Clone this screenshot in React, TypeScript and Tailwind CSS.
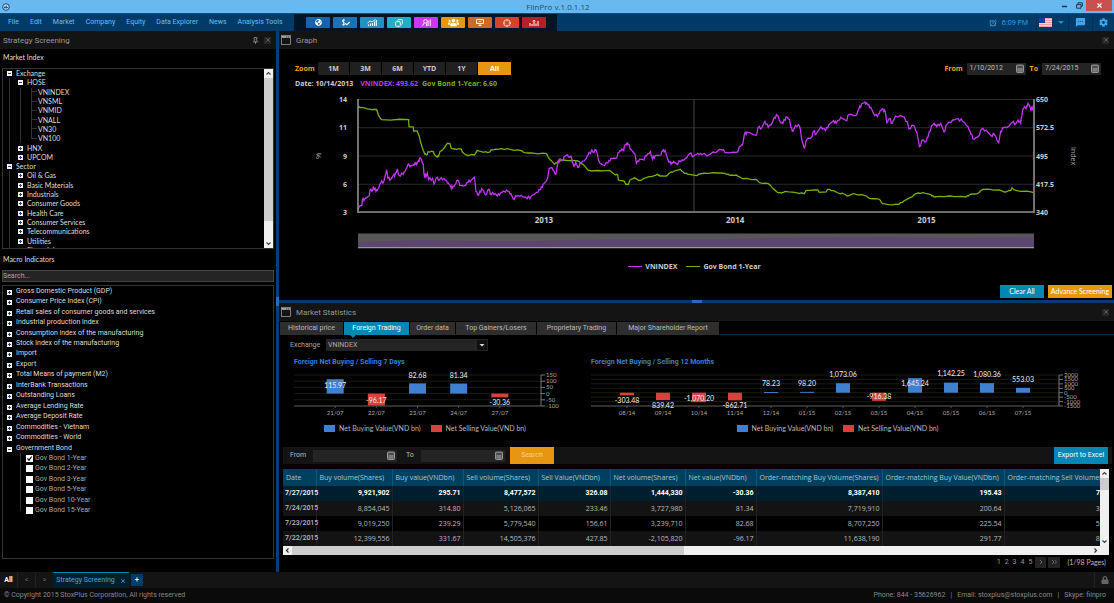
import React from "react";
import { FaGlobeAmericas, FaUsers, FaLock, FaCog } from "react-icons/fa";
import { MdSms } from "react-icons/md";
import { AlarmClock, Copy, Crosshair, Minus, Pin, X } from "lucide-react";

/* ---------- data ---------- */

interface TreeItem {
  label: string;
  level: number;
  open?: boolean;
  leaf?: boolean;
  last?: boolean;
}

const marketTree: TreeItem[] = [
  { label: "Exchange", level: 0, open: true },
  { label: "HOSE", level: 1, open: true },
  { label: "VNINDEX", level: 2, leaf: true },
  { label: "VNSML", level: 2, leaf: true },
  { label: "VNMID", level: 2, leaf: true },
  { label: "VNALL", level: 2, leaf: true },
  { label: "VN30", level: 2, leaf: true },
  { label: "VN100", level: 2, leaf: true, last: true },
  { label: "HNX", level: 1 },
  { label: "UPCOM", level: 1 },
  { label: "Sector", level: 0, open: true },
  { label: "Oil & Gas", level: 1 },
  { label: "Basic Materials", level: 1 },
  { label: "Industrials", level: 1 },
  { label: "Consumer Goods", level: 1 },
  { label: "Health Care", level: 1 },
  { label: "Consumer Services", level: 1 },
  { label: "Telecommunications", level: 1 },
  { label: "Utilities", level: 1 },
  { label: "Financials", level: 1 },
];

const macroItems = [
  "Gross Domestic Product (GDP)",
  "Consumer Price Index (CPI)",
  "Retail sales of consumer goods and services",
  "Industrial production index",
  "Consumption index of the manufacturing",
  "Stock index of the manufacturing",
  "Import",
  "Export",
  "Total Means of payment (M2)",
  "InterBank Transactions",
  "Outstanding Loans",
  "Average Lending Rate",
  "Average Deposit Rate",
  "Commodities - Vietnam",
  "Commodities - World",
];

const bonds = ["1-Year", "2-Year", "3-Year", "5-Year", "10-Year", "15-Year"];

// index and bond series, in chart units (2030 x 339)
const vnIndex =
  "0,333 4,322 12,318 13,303 20,300 34,290 36,273 44,274 46,262 54,277 60,270 68,252 78,246 86,212 90,237 98,242 108,226 110,232 118,210 122,228 136,226 144,210 152,195 156,203 166,197 172,195 178,192 182,184 188,178 196,196 198,225 204,234 208,222 212,242 224,238 228,255 236,236 244,243 250,236 262,244 272,252 278,262 284,267 292,256 298,244 310,260 320,260 330,250 340,243 350,234 354,277 362,289 366,276 374,272 384,288 392,271 400,287 404,280 418,291 428,282 438,276 450,277 460,285 466,300 476,292 490,289 508,299 520,292 536,280 548,272 556,256 566,246 570,235 574,208 582,206 586,214 594,226 600,194 606,180 614,184 622,171 640,172 642,180 648,204 654,190 660,205 670,192 684,180 690,170 702,153 706,160 714,152 726,192 736,198 750,192 760,178 774,178 784,160 792,150 798,154 800,141 806,134 812,136 820,152 832,166 836,193 846,180 856,182 866,171 878,158 884,180 892,170 908,168 914,157 922,154 930,180 940,196 948,187 956,194 968,188 984,178 996,164 1008,171 1020,163 1032,167 1056,167 1066,159 1094,153 1106,161 1136,160 1150,141 1156,133 1160,107 1168,99 1196,109 1202,85 1212,87 1222,67 1232,85 1244,71 1250,55 1260,49 1268,69 1276,73 1286,53 1296,61 1300,85 1306,97 1314,79 1326,81 1334,127 1340,147 1348,121 1362,115 1368,97 1376,105 1390,83 1404,95 1414,77 1428,65 1436,73 1450,55 1466,65 1474,47 1496,49 1504,31 1512,15 1522,9 1530,17 1540,25 1548,43 1560,53 1568,35 1576,29 1584,41 1588,71 1596,59 1604,73 1614,51 1636,53 1650,69 1654,89 1668,79 1678,99 1686,143 1696,123 1704,129 1712,113 1722,81 1730,73 1738,83 1750,73 1760,99 1768,77 1786,63 1802,59 1816,67 1832,83 1840,105 1850,121 1864,111 1872,91 1886,93 1902,111 1910,105 1924,131 1930,97 1938,87 1952,83 1964,71 1976,73 1982,63 1990,73 1996,33 2002,23 2006,29 2012,13 2018,23 2024,35 2028,19";

const govBond =
  "0,25 10,25 38,31 56,32 62,50 70,62 152,62 153,83 166,84 167,96 178,96 184,112 188,130 194,148 200,165 208,167 210,158 226,158 230,168 236,173 242,172 246,158 254,153 262,142 268,133 276,134 280,148 290,150 310,150 314,160 324,168 350,168 358,154 376,160 396,159 400,152 420,151 450,149 460,152 490,155 500,161 530,163 566,164 572,176 590,196 600,188 616,183 660,186 676,196 690,212 700,216 756,214 770,226 780,228 782,243 800,247 804,256 812,256 816,244 830,236 844,245 866,236 890,230 900,226 906,231 926,231 936,222 950,216 968,211 980,223 996,226 1016,230 1026,225 1066,221 1102,223 1116,229 1136,228 1154,239 1196,241 1206,251 1232,254 1252,273 1258,279 1272,283 1282,277 1316,281 1340,284 1346,274 1380,273 1386,280 1406,279 1410,271 1428,275 1442,282 1460,285 1470,291 1488,284 1526,291 1536,298 1564,300 1576,314 1596,317 1624,316 1640,305 1660,295 1676,284 1696,281 1720,287 1730,294 1776,291 1826,294 1838,286 1860,284 1876,271 1926,273 1941,279 1960,275 1964,266 1970,273 2028,280";

function withNoise(points: string, amp: number) {
  const pts = points.split(" ").map((p) => p.split(",").map(Number));
  const out: string[] = [];
  pts.forEach(([x, y], i) => {
    out.push(`${x},${y}`);
    const next = pts[i + 1];
    if (next && next[0] - x > 5) {
      const k = ((i * 37) % 11) / 10 - 0.5;
      const dx = (next[0] - x) / 3;
      const dy = (next[1] - y) / 3;
      out.push(`${x + dx},${y + dy + k * amp}`);
      out.push(`${x + 2 * dx},${y + 2 * dy - k * amp}`);
    }
  });
  return out.join(" ");
}

interface Bar {
  label: string;
  value: number;
  text: string;
  textY: number;
}

const sevenDays: Bar[] = [
  { label: "21/07", value: 115.97, text: "115.97", textY: 21 },
  { label: "22/07", value: -96.17, text: "-96.17", textY: 36 },
  { label: "23/07", value: 82.68, text: "82.68", textY: 11 },
  { label: "24/07", value: 81.34, text: "81.34", textY: 11 },
  { label: "27/07", value: -30.36, text: "-30.36", textY: 38 },
];

const twelveMonths: Bar[] = [
  { label: "08/14", value: -303.48, text: "-303.48", textY: 36 },
  { label: "09/14", value: -839.42, text: "839.42", textY: 41 },
  { label: "10/14", value: -1070.2, text: "-1,070.20", textY: 34 },
  { label: "11/14", value: -862.71, text: "-862.71", textY: 41 },
  { label: "12/14", value: 78.23, text: "78.23", textY: 19 },
  { label: "01/15", value: 98.2, text: "98.20", textY: 19 },
  { label: "02/15", value: 1073.06, text: "1,073.06", textY: 10 },
  { label: "03/15", value: -916.38, text: "-916.38", textY: 32 },
  { label: "04/15", value: 1645.24, text: "1,645.24", textY: 19 },
  { label: "05/15", value: 1142.25, text: "1,142.25", textY: 9 },
  { label: "06/15", value: 1080.36, text: "1,080.36", textY: 10 },
  { label: "07/15", value: 553.03, text: "553.03", textY: 15 },
];

const columns = [
  { name: "Date", width: "w-[33px]" },
  { name: "Buy volume(Shares)", width: "w-[76px]" },
  { name: "Buy value(VNDbn)", width: "w-[71px]" },
  { name: "Sell volume(Shares)", width: "w-[75px]" },
  { name: "Sell Value(VNDbn)", width: "w-[72px]" },
  { name: "Net volume(Shares)", width: "w-[75px]" },
  { name: "Net value(VNDbn)", width: "w-[71px]" },
  { name: "Order-matching Buy Volume(Shares)", width: "w-[126px]" },
  { name: "Order-matching Buy Value(VNDbn)", width: "w-[122px]" },
  { name: "Order-matching Sell Volume(Shares)", width: "w-[126px]" },
];

const rows = [
  ["7/27/2015", "9,921,902", "295.71", "8,477,572", "326.08", "1,444,330", "-30.36", "8,387,410", "195.43", "7,033,080"],
  ["7/24/2015", "8,854,045", "314.80", "5,126,065", "233.46", "3,727,980", "81.34", "7,719,910", "200.64", "3,991,930"],
  ["7/23/2015", "9,019,250", "239.29", "5,779,540", "156.61", "3,239,710", "82.68", "8,707,250", "225.54", "5,467,540"],
  ["7/22/2015", "12,399,556", "331.67", "14,505,376", "427.85", "-2,105,820", "-96.17", "11,638,190", "291.77", "8,744,010"],
];

/* ---------- small pieces ---------- */

const Toggle = ({ open }: { open?: boolean }) => (
  <svg viewBox="0 0 5 5" className="size-[5px] shrink-0" shapeRendering="crispEdges">
    <rect width="5" height="5" fill="#f4f4f4" />
    <path d={open ? "M1 2.5h3" : "M1 2.5h3M2.5 1v3"} stroke="#2b3f8f" strokeWidth="1" />
  </svg>
);

const Guide = ({ half }: { half?: boolean }) => (
  <span className="w-[11px] h-full shrink-0 flex justify-center items-start">
    <span className={half ? "w-px h-1/2 bg-[#333]" : "w-px h-full bg-[#333]"} />
  </span>
);

const CloseBox = () => (
  <button aria-label="Close panel" className="size-[7px] bg-[#262626] text-[#707070] flex items-center justify-center">
    <X size={6} strokeWidth={3} />
  </button>
);

const WindowIcon = () => (
  <svg viewBox="0 0 10 10" className="size-[10px] shrink-0" fill="none">
    <rect x="0.5" y="0.5" width="9" height="9" stroke="#999" strokeWidth="0.8" />
    <path d="M1 2h8" stroke="#999" strokeWidth="2" />
    <path d="M5 2h1M7 2h1" stroke="#222" strokeWidth="0.8" />
  </svg>
);

const CalendarIcon = () => (
  <svg viewBox="0 0 8 9" className="w-2 h-[9px] shrink-0">
    <rect x="0.5" y="1" width="7" height="7.5" rx="0.8" fill="#666" stroke="#aaa" strokeWidth="0.8" />
    <path d="M1.5 3h5" stroke="#222" strokeWidth="0.8" />
    <path d="M2 4.8h4M2 6.6h4M3 4v3.6M5 4v3.6" stroke="#999" strokeWidth="0.5" />
  </svg>
);

const DateBox = ({ id, value, className }: { id: string; value?: string; className: string }) => (
  <div className={`flex items-center bg-[#242424] h-3 pl-[3px] pr-0.5 ${className}`}>
    <input id={id} defaultValue={value} className="min-w-0 flex-1 bg-transparent text-[#bbb] outline-none" />
    <CalendarIcon />
  </div>
);

const PanelHeader = ({ title }: { title: string }) => (
  <div className="h-[18px] bg-[#141414] flex items-center pl-0.5 pr-[5px]">
    <WindowIcon />
    <h2 className="text-[8px] text-[#999] pl-[5px] flex-1">{title}</h2>
    <CloseBox />
  </div>
);

const VScroll = ({ thumb }: { thumb: string }) => (
  <div className="w-[9px] shrink-0 bg-[#f0f0f0] flex flex-col items-center">
    <svg viewBox="0 0 9 9" className="size-[9px]">
      <path d="M2.500 5.500l2-2 2 2" stroke="#444" strokeWidth="1.200" fill="none" />
    </svg>
    <div className={`w-full bg-[#cdcdcd] ${thumb}`} />
    <div className="flex-1" />
    <svg viewBox="0 0 9 9" className="size-[9px]">
      <path d="M2.500 3.500l2 2 2-2" stroke="#444" strokeWidth="1.200" fill="none" />
    </svg>
  </div>
);

/* ---------- top bars ---------- */

const TitleBar = () => (
  <header className="h-[13px] bg-[#69b9f1] flex items-stretch">
    <div className="flex-1 flex items-center pl-0.5">
      <svg viewBox="0 0 8 8" className="size-2">
        <circle cx="4" cy="4" r="3.3" fill="#b9d8ee" stroke="#1c4a86" strokeWidth="1" />
        <path d="M2 4.5h4M3 3v2.5M4.5 2.5v3" stroke="#1c4a86" strokeWidth="0.8" />
      </svg>
    </div>
    <h1 className="text-[8px] text-[#2a4a63] leading-[13px] font-['Open_Sans',sans-serif]">FiinPro v.1.0.1.12</h1>
    <div className="flex-1 flex justify-end text-[#1d3548]">
      <button aria-label="Minimize" className="w-4 flex items-end justify-center pb-[3px]">
        <Minus size={7} strokeWidth={5} />
      </button>
      <button aria-label="Restore" className="w-[14px] flex items-start pt-0.5 justify-center">
        <svg viewBox="0 0 7 7" className="size-[7px]" fill="none" stroke="currentColor">
          <path d="M2 2V.8h4.3v3.4H5" />
          <path d="M.6 2.6H5v3.6H.6z" />
        </svg>
      </button>
      <button aria-label="Close" className="w-[26px] h-[11px] mr-0.5 bg-[#c75050] text-white flex items-center justify-center">
        <X size={7} strokeWidth={4} />
      </button>
    </div>
  </header>
);

const tools = [
  { name: "World", bg: "bg-[#1763b0]", icon: <FaGlobeAmericas size={7} /> },
  {
    name: "Currency",
    bg: "bg-[#1c72b5]",
    icon: (
      <svg viewBox="0 0 9 7" className="w-[9px] h-[7px]" fill="none" stroke="currentColor">
        <path d="M4 1.3C3.300.7 1.200.6 1.200 2s2.900 1.200 2.900 2.700S1.800 6.200 1 5.300M2.600 0v6.800" strokeWidth="0.8" />
        <path d="M4.300 4.500l1.600 1.300L8.600 3" strokeWidth="1.100" />
      </svg>
    ),
  },
  {
    name: "Market chart",
    bg: "bg-[#2390c0]",
    icon: (
      <svg viewBox="0 0 10 7" className="w-[10px] h-[7px]" fill="none" stroke="currentColor">
        <path d="M1.500 7V5.500M3.500 7V4.500M5.500 7V4M7.500 7V2.500M9.300 7V1" strokeWidth="1.100" />
        <path d="M.5 4l2.500-2 2 .8L8.500.4" strokeWidth="0.8" />
      </svg>
    ),
  },
  { name: "Reports", bg: "bg-[#22afc6]", icon: <Copy size={8} strokeWidth={2.5} className="-scale-x-100" /> },
  {
    name: "Screening",
    bg: "bg-[#c739f5]",
    icon: (
      <svg viewBox="0 0 9 7" className="w-[9px] h-[7px]" fill="none" stroke="currentColor">
        <circle cx="3.500" cy="2.300" r="1.800" strokeWidth="0.9" />
        <path d="M2.300 3.800L.5 6.800M4.500 7V4.500M6 7V1.500M8.200 7V.5" strokeWidth="1" />
      </svg>
    ),
  },
  { name: "People", bg: "bg-[#e69612]", icon: <FaUsers size={11} /> },
  {
    name: "Monitor",
    bg: "bg-[#cc6c22]",
    icon: (
      <svg viewBox="0 0 8 7" className="w-2 h-[7px]" fill="none" stroke="currentColor">
        <path d="M.5.5h7v4h-7zM2.500 6.500h3M4 4.500v2" strokeWidth="0.9" />
        <path d="M2 3.500l1.200-1.200 1 .7 1.500-1.500" strokeWidth="0.7" />
      </svg>
    ),
  },
  { name: "Target", bg: "bg-[#d9422a]", icon: <Crosshair size={8} strokeWidth={2} /> },
  {
    name: "Analytics",
    bg: "bg-[#b52026]",
    icon: (
      <svg viewBox="0 0 10 7" className="w-[10px] h-[7px]" fill="none" stroke="currentColor">
        <path d="M1 7V4M3 7V5M5 7V1.500M7 7V4.500M9 7V2" strokeWidth="1" />
        <path d="M3.500 2.500L5 1l1.500 1.500" strokeWidth="0.7" />
      </svg>
    ),
  },
];

const MenuBar = () => (
  <nav className="h-[18px] bg-[#003a66] border-t border-[#00528c] flex items-center text-[#6fbdf2]">
    <div className="w-[294px] flex items-center gap-[11px] pl-2 whitespace-nowrap">
      {["File", "Edit", "Market", "Company", "Equity", "Data Explorer", "News", "Analysis Tools"].map((m) => (
        <button key={m}>{m}</button>
      ))}
    </div>
    <div className="h-full bg-[#001526] flex items-center gap-[3px] pl-3 pr-[11px]">
      {tools.map((t) => (
        <button
          key={t.name}
          aria-label={t.name}
          className={`w-6 h-[11px] rounded-[1px] text-white flex items-center justify-center ${t.bg}`}
        >
          {t.icon}
        </button>
      ))}
    </div>
    <div className="flex-1 flex justify-end items-center h-full">
      <AlarmClock size={8} strokeWidth={2.5} className="text-[#43a5e8]" />
      <span className="pl-[5px] pr-2 text-[#43a5e8] font-['Open_Sans',sans-serif]">6:09 PM</span>
      <button aria-label="Language" className="h-full flex items-center gap-[6px] border-l border-[#002f54] px-0.5">
        <svg viewBox="0 0 13 9" className="w-[13px] h-[9px]">
          <rect width="13" height="9" fill="#f3d5da" />
          <path d="M0 .5h13M0 2.500h13M0 4.500h13M0 6.500h13M0 8.500h13" stroke="#ea95a2" strokeWidth="0.9" />
          <rect width="6" height="5" fill="#1d3f8f" />
        </svg>
        <svg viewBox="0 0 6 3" className="w-[6px] h-[3px]">
          <path d="M0 0h6L3 3z" fill="#1b8fc9" />
        </svg>
      </button>
      <button aria-label="Messages" className="h-full ml-0.5 px-[6px] border-l border-[#002f54] flex items-center">
        <MdSms size={11} className="text-[#43a5e8]" />
      </button>
      <button aria-label="Settings" className="h-full px-[6px] border-l border-[#002f54] flex items-center">
        <FaCog size={9} className="text-[#43a5e8]" />
      </button>
    </div>
  </nav>
);

/* ---------- left side ---------- */

const LeftPanel = () => (
  <aside className="w-[276px] shrink-0 flex flex-col">
    <div className="h-[18px] bg-[#141414] flex items-center pl-[3px] pr-[5px] gap-[5px]">
      <h2 className="text-[8px] text-[#999] flex-1">Strategy Screening</h2>
      <Pin size={7} strokeWidth={3} className="text-[#999]" />
      <CloseBox />
    </div>
    <h3 className="text-[#ddd] pl-[3px] pt-1 pb-[6px] font-['Lato',sans-serif]">Market Index</h3>
    <div className="mx-0.5 h-[181px] border border-[#333] flex overflow-hidden">
      <ul className="flex-1 h-[186px] grid auto-rows-fr pl-px text-[#ddd] font-['Lato',sans-serif]">
        {marketTree.map((t) => (
          <li key={t.label} className="flex items-center min-h-0">
            {t.level > 0 && <Guide />}
            {t.level > 1 && <Guide />}
            {t.leaf ? (
              <span className="w-[11px] h-full flex justify-end items-start">
                <span className={t.last ? "w-px h-1/2 bg-[#333]" : "w-px h-full bg-[#333]"} />
                <span className="w-[5px] h-1/2 border-b border-[#333]" />
              </span>
            ) : (
              <span className="w-[11px] flex justify-center">
                <Toggle open={t.open} />
              </span>
            )}
            <span className="pl-px">{t.label}</span>
          </li>
        ))}
      </ul>
      <VScroll thumb="grow-[8]" />
    </div>
    <h3 className="text-[#ddd] pl-[3px] pt-[6px] pb-[6px] font-['Lato',sans-serif]">Macro Indicators</h3>
    <input
      aria-label="Search indicators"
      placeholder="Search..."
      className="mx-0.5 h-3 bg-[#242424] border border-[#444] text-[#bbb] placeholder:text-[#aaa] outline-none"
    />
    <div className="mx-0.5 mt-[3px] mb-[13px] flex-1 border border-[#333]">
      <ul className="h-[230px] grid auto-rows-fr pl-px text-[#ddd]">
        {macroItems.map((m) => (
          <li key={m} className="flex items-center min-h-0">
            <span className="w-[11px] flex justify-center pt-0.5">
              <Toggle />
            </span>
            <span className="pl-px">{m}</span>
          </li>
        ))}
        <li className="flex items-center min-h-0">
          <span className="w-[11px] flex justify-center pt-0.5">
            <Toggle open />
          </span>
          <span className="pl-px">Government Bond</span>
        </li>
        {bonds.map((b, i) => (
          <li key={b} className="flex items-center min-h-0 pl-[11px]">
            <Guide half={i === bonds.length - 1} />
            <label className="flex items-center gap-0.5 text-[#aaa]">
              <span className="relative size-[7px] bg-white">
                <input type="checkbox" defaultChecked={i === 0} className="peer appearance-none absolute inset-0" />
                <svg viewBox="0 0 7 7" className="hidden peer-checked:block absolute inset-0 pointer-events-none">
                  <path d="M1.500 3.500l1.500 1.700 2.700-3.700" stroke="#111" strokeWidth="1.200" fill="none" />
                </svg>
              </span>
              Gov Bond {b}
            </label>
          </li>
        ))}
      </ul>
    </div>
  </aside>
);

/* ---------- graph ---------- */

const leftTicks = ["14", "11", "9", "6", "3"];
const rightTicks = ["650", "572.5", "495", "417.5", "340"];
const years = [
  { name: "2013", x: "27.5%" },
  { name: "2014", x: "55.8%" },
  { name: "2015", x: "84.1%" },
];

const LineChart = () => (
  <div className="pl-[79px] pr-[80px] mt-[11px]">
    <svg className="block w-full h-[151px] overflow-visible">
      {leftTicks.map((t, i) => (
        <g key={t}>
          <line x1="0" x2="100%" y1={i * 28.25 + 0.5} y2={i * 28.25 + 0.5} stroke="#2b2b2b" />
          <text x="-11" y={i * 28.25 + 3} textAnchor="end" className="fill-[#ccc] font-bold">
            {t}
          </text>
          <text x="100%" dx="2" y={i * 28.25 + 3} className="fill-[#ccc] font-bold">
            {rightTicks[i]}
          </text>
        </g>
      ))}
      <line x1="49.7%" x2="49.7%" y1="0" y2="113" stroke="#444" />
      <svg width="100%" height="113" viewBox="0 0 2030 339" preserveAspectRatio="none" overflow="visible">
        <polyline points={withNoise(govBond, 3)} fill="none" stroke="#76b000" strokeWidth="1.3" vectorEffect="non-scaling-stroke" />
        <polyline points={withNoise(vnIndex, 9)} fill="none" stroke="#c435f5" strokeWidth="1.3" vectorEffect="non-scaling-stroke" />
      </svg>
      <line x1="0" x2="0" y1="0" y2="114" stroke="#999" strokeWidth="1.5" />
      <line x1="100%" x2="100%" y1="0" y2="114" stroke="#999" strokeWidth="1.5" />
      <line x1="0" x2="100%" y1="113" y2="113" stroke="#888" strokeWidth="1.5" />
      <text transform="translate(-37 57) rotate(-90)" textAnchor="middle" className="fill-[#aaa] text-[8px]">
        %
      </text>
      <svg x="100%" overflow="visible">
        <text transform="translate(37 57) rotate(90)" textAnchor="middle" className="fill-[#aaa]">
          Index
        </text>
      </svg>
      {years.map((y) => (
        <text key={y.name} x={y.x} y="124" textAnchor="middle" className="fill-[#ccc] font-bold text-[8px]">
          {y.name}
        </text>
      ))}
      {/* range navigator */}
      <rect x="0" y="134.500" width="100%" height="15" fill="#575757" />
      <svg y="135" width="100%" height="13" viewBox="0 0 100 13" preserveAspectRatio="none">
        <path d="M0 8L9 6 18 7 26 7 32 6 40 5 55 5 61 4 78 3 88 4 100 3V13H0z" fill="#5c4670" />
      </svg>
      <line x1="0" x2="100%" y1="148.500" y2="148.500" stroke="#999" />
    </svg>
  </div>
);

const GraphPanel = () => (
  <section className="flex flex-col">
    <PanelHeader title="Graph" />
    <div className="font-['Open_Sans',sans-serif]">
      <div className="pl-4 pr-[13px] pt-[13px] flex items-center">
        <span className="text-[#f0a010] font-bold w-[23px]">Zoom</span>
        <div className="flex h-[13px] font-bold text-[#ccc]">
          {["1M", "3M", "6M", "YTD", "1Y"].map((z) => (
            <button key={z} className="w-8 bg-[#202020] border-r border-black">
              {z}
            </button>
          ))}
          <button className="w-[33px] bg-[#e89611] text-white">All</button>
        </div>
        <div className="flex-1" />
        <label htmlFor="graph-from" className="text-[#f0a010] font-bold pr-1">
          From
        </label>
        <div className="font-['Roboto',sans-serif]">
          <DateBox id="graph-from" value="1/10/2012" className="w-[59px]" />
        </div>
        <label htmlFor="graph-to" className="text-[#f0a010] font-bold px-1">
          To
        </label>
        <div className="font-['Roboto',sans-serif]">
          <DateBox id="graph-to" value="7/24/2015" className="w-[59px]" />
        </div>
      </div>
      <p className="pl-4 mt-1 font-bold flex gap-1">
        <span className="text-[#ccc] pr-[3px]">Date: 10/14/2013</span>
        <span className="text-[#c435f5]">VNINDEX: 493.62</span>
        <span className="text-[#76b000]">Gov Bond 1-Year: 6.60</span>
      </p>
      <LineChart />
      <div className="mt-3 pr-1 flex justify-center gap-[9px] font-bold text-[#ccc]">
        <span className="flex items-center gap-[3px]">
          <i className="w-[14px] h-px bg-[#c435f5]" />
          VNINDEX
        </span>
        <span className="flex items-center gap-[3px]">
          <i className="w-[14px] h-px bg-[#76b000]" />
          Gov Bond 1-Year
        </span>
      </div>
    </div>
    <div className="mt-[14px] mb-0.5 pr-0.5 flex justify-end gap-1 text-white font-['Lato',sans-serif]">
      <button className="w-11 h-[13px] bg-[#0087b3]">Clear All</button>
      <button className="w-16 h-[13px] bg-[#e89611] whitespace-nowrap">Advance Screening</button>
    </div>
  </section>
);

/* ---------- market statistics ---------- */

interface BarChartProps {
  title: string;
  bars: Bar[];
  ticks: number[];
  barWidth: number;
  plotMargin: string;
  legendMargin: string;
}

const TOP = 8;
const HEIGHT = 31;

const BarChart = ({ title, bars, ticks, barWidth, plotMargin, legendMargin }: BarChartProps) => {
  const max = ticks[0];
  const min = ticks[ticks.length - 1];
  const toY = (v: number) => TOP + ((max - v) / (max - min)) * HEIGHT;

  return (
    <div>
      <h3 className="font-bold text-[#3a7fcf]">{title}</h3>
      <div className={plotMargin}>
        <svg className="block w-full h-[53px] overflow-visible font-['Lato',sans-serif]">
          {ticks.map((t) => (
            <g key={t}>
              <line x1="0" x2="100%" y1={toY(t)} y2={toY(t)} stroke="#1c1c0a" />
              <svg x="100%" y={toY(t)} overflow="visible">
                <line x1="0" x2="4" y1="0" y2="0" stroke="#777" />
                <text x="5" y="2" className="fill-[#aaa] text-[6px]">
                  {t}
                </text>
              </svg>
            </g>
          ))}
          <line x1="0" x2="100%" y1={TOP + HEIGHT} y2={TOP + HEIGHT} stroke="#555" />
          <line x1="100%" x2="100%" y1={TOP} y2={TOP + HEIGHT} stroke="#777" />
          {bars.map((b, i) => {
            const x = `${((i + 1) / (bars.length + 1)) * 100}%`;
            const y0 = toY(Math.max(b.value, 0));
            return (
              <svg key={b.label} x={x} overflow="visible">
                <rect
                  x={-barWidth / 2}
                  y={y0}
                  width={barWidth}
                  height={Math.max(toY(Math.min(b.value, 0)) - y0, 1)}
                  fill={b.value > 0 ? "#3f80d0" : "#d9413d"}
                />
                <line x1="0" x2="0" y1={TOP + HEIGHT} y2={TOP + HEIGHT + 2} stroke="#555" />
                <text x="0" y={b.textY} textAnchor="middle" className="fill-[#eee]">
                  {b.text}
                </text>
                <text x="0" y="48" textAnchor="middle" className="fill-[#aaa] text-[6px]">
                  {b.label}
                </text>
              </svg>
            );
          })}
        </svg>
      </div>
      <div className={`mt-1 flex justify-center gap-[10px] text-[#bbb] font-['Lato',sans-serif] ${legendMargin}`}>
        <span className="flex items-center gap-1">
          <i className="w-[11px] h-[7px] bg-[#3f80d0]" />
          Net Buying Value(VND bn)
        </span>
        <span className="flex items-center gap-1">
          <i className="w-[11px] h-[7px] bg-[#d9413d]" />
          Net Selling Value(VND bn)
        </span>
      </div>
    </div>
  );
};

const tabs = [
  { name: "Historical price", width: "w-[63px]" },
  { name: "Foreign Trading", width: "w-[65px]" },
  { name: "Order data", width: "w-[45px]" },
  { name: "Top Gainers/Losers", width: "w-[80px]" },
  { name: "Proprietary Trading", width: "w-[79px]" },
  { name: "Major Shareholder Report", width: "w-[102px]" },
];

const StatsTable = () => (
  <div className="ml-1 mr-[5px] mt-[5px] flex">
    <div className="flex-1 min-w-0">
      <div className="overflow-hidden font-['Open_Sans',sans-serif]">
        <table className="table-fixed w-[847px] border-collapse">
          <thead>
            <tr className="h-[17px] bg-[#00405f] text-[#a9c6d3]">
              {columns.map((c) => (
                <th
                  key={c.name}
                  className={`font-normal text-left p-0 pl-[3px] border-r border-[#005a82] whitespace-nowrap ${c.width}`}
                >
                  {c.name}
                </th>
              ))}
            </tr>
          </thead>
          <tbody>
            {rows.map((r, ri) => (
              <tr
                key={r[0]}
                className={
                  ri === 0
                    ? "h-[15px] bg-[#001f2e] text-white font-bold font-['Roboto',sans-serif]"
                    : ri % 2
                      ? "h-[15px] bg-[#131313] text-[#bbb]"
                      : "h-[15px] bg-black text-[#bbb]"
                }
              >
                {r.map((v, i) => (
                  <td
                    key={i}
                    className={
                      i === 0
                        ? "p-0 pl-0.5 border-r border-[#222] font-medium font-['Roboto',sans-serif]"
                        : "p-0 pr-0.5 text-right border-r border-[#222]"
                    }
                  >
                    {v}
                  </td>
                ))}
              </tr>
            ))}
          </tbody>
        </table>
      </div>
      <div className="h-[9px] bg-[#f0f0f0] flex items-center">
        <svg viewBox="0 0 9 9" className="size-[9px]">
          <path d="M5.500 2.500l-2 2 2 2" stroke="#333" strokeWidth="1.200" fill="none" />
        </svg>
        <div className="h-full w-[48%] bg-[#cdcdcd]" />
        <div className="flex-1" />
        <svg viewBox="0 0 9 9" className="size-[9px]">
          <path d="M3.500 2.500l2 2-2 2" stroke="#333" strokeWidth="1.200" fill="none" />
        </svg>
      </div>
    </div>
    <div className="flex flex-col bg-[#f0f0f0]">
      <div className="flex flex-1">
        <VScroll thumb="h-3" />
      </div>
      <div className="h-[9px]" />
    </div>
  </div>
);

const StatsPanel = () => (
  <section className="flex-1 flex flex-col">
    <PanelHeader title="Market Statistics" />
    <div className="mt-px ml-px h-[13px] flex gap-px border-b border-[#00263c]">
      {tabs.map((t, i) => (
        <button
          key={t.name}
          className={
            i === 1
              ? `relative h-[13px] bg-[#0087b3] text-white ${t.width}`
              : `h-[13px] bg-[#2e2e2e] text-[#bbb] whitespace-nowrap ${t.width}`
          }
        >
          {t.name}
          {i === 1 && (
            <svg viewBox="0 0 6 3" className="absolute left-[6px] top-full w-[6px] h-[3px]">
              <path d="M0 0h6L3 3z" fill="#0087b3" />
            </svg>
          )}
        </button>
      ))}
    </div>
    <div className="mt-1 pl-[11px] flex items-center">
      <label htmlFor="exchange" className="w-9 text-[#aaa]">
        Exchange
      </label>
      <div className="relative w-[162px] h-3">
        <select id="exchange" className="block w-full h-3 appearance-none bg-[#242424] text-[#aaa] pl-0.5 outline-none">
          <option>VNINDEX</option>
        </select>
        <svg viewBox="0 0 10 10" className="absolute right-px top-px size-[10px] bg-[#111] pointer-events-none">
          <path d="M2.500 4h5L5 6.500z" fill="#ddd" />
        </svg>
      </div>
    </div>
    <div className="mt-[7px] pl-[15px] grid grid-cols-[297fr_523fr]">
      <BarChart
        title="Foreign Net Buying / Selling 7 Days"
        bars={sevenDays}
        ticks={[150, 100, 50, 0, -50, -100]}
        barWidth={17}
        plotMargin="mr-[50px]"
        legendMargin="mr-[35px]"
      />
      <BarChart
        title="Foreign Net Buying / Selling 12 Months"
        bars={twelveMonths}
        ticks={[2000, 1500, 1000, 500, 0, -500, -1000, -1500]}
        barWidth={14}
        plotMargin="mr-[55px]"
        legendMargin="mr-[30px]"
      />
    </div>
    <form className="mt-[14px] ml-1 mr-0.5 h-[17px] bg-[#141414] flex items-center text-[#bbb]">
      <label htmlFor="stat-from" className="w-[30px] pl-[7px]">
        From
      </label>
      <DateBox id="stat-from" className="w-[84px]" />
      <label htmlFor="stat-to" className="w-6 pl-[9px]">
        To
      </label>
      <DateBox id="stat-to" className="w-[84px]" />
      <button type="button" className="ml-[5px] w-11 h-full bg-[#e89611] text-[#f5cf94]">
        Search
      </button>
      <div className="flex-1" />
      <button type="button" className="mr-1 w-[54px] h-full bg-[#0087b3] text-white">
        Export to Excel
      </button>
    </form>
    <StatsTable />
    <div className="mt-px pr-2 flex justify-end items-center text-[#999] h-3">
      <div className="flex gap-1">
        <a href="#1" className="text-[#e89611]">1</a>
        <a href="#2">2</a>
        <a href="#3">3</a>
        <a href="#4">4</a>
        <a href="#5">5</a>
      </div>
      <button aria-label="Next page" className="ml-[3px] w-[11px] h-[11px] bg-[#222] flex items-center justify-center">
        <svg viewBox="0 0 6 6" className="size-[6px]" fill="none" stroke="#666">
          <path d="M2 1l2 2-2 2" />
        </svg>
      </button>
      <button aria-label="Last page" className="ml-0.5 w-3 h-[11px] bg-[#222] flex items-center justify-center">
        <svg viewBox="0 0 8 6" className="w-2 h-[6px]" fill="none" stroke="#666">
          <path d="M2 1l2 2-2 2M4.500 1l2 2-2 2" />
        </svg>
      </button>
      <span className="ml-[7px] text-[#bbb] font-['Lato',sans-serif]">(1/98 Pages)</span>
    </div>
  </section>
);

/* ---------- bottom ---------- */

const Footer = () => (
  <footer>
    <div className="h-4 bg-[#141414] flex items-center text-[#aaa]">
      <button className="w-[17px] font-bold text-white">All</button>
      <button className="w-[18px] h-full border-l border-[#222] text-[#666]">&lt;</button>
      <button className="w-[18px] h-full border-l border-[#222] text-[#666]">&gt;</button>
      <button className="w-[76px] h-full bg-[#001f2e] border-t border-[#0087b3] text-[#43a5e8] flex items-center justify-center gap-[5px]">
        Strategy Screening
        <X size={6} strokeWidth={3} />
      </button>
      <button aria-label="Add tab" className="ml-0.5 size-3 bg-[#003a66] text-white font-bold">
        +
      </button>
      <div className="flex-1" />
      <button aria-label="Lock" className="w-5 h-full border-l border-[#222] flex items-center justify-center text-[#666]">
        <FaLock size={8} />
      </button>
    </div>
    <div className="h-[15px] bg-[#0a0a0a] flex items-center justify-between pl-1 pr-2 text-[#888]">
      <span>© Copyright 2015 StoxPlus Corporation, All rights reserved</span>
      <div className="flex gap-[5px]">
        <span>Phone: 844 - 35626962</span>
        <span>|</span>
        <span>Email: stoxplus@stoxplus.com</span>
        <span>|</span>
        <span>Skype: fiinpro</span>
      </div>
    </div>
  </footer>
);

export default function App() {
  return (
    <div className="min-h-screen bg-black flex flex-col text-[7px] leading-[9px] font-['Roboto',sans-serif]">
      <TitleBar />
      <MenuBar />
      <main className="flex-1 flex">
        <LeftPanel />
        <div className="w-[3px] shrink-0 bg-[#003f78] flex items-center">
          <div className="w-full h-[9px] bg-[#2a6ab8]" />
        </div>
        <div className="flex-1 min-w-0 flex flex-col">
          <GraphPanel />
          <div className="h-[3px] bg-[#003a70] flex justify-center">
            <div className="w-[10px] h-full bg-[#2a6ab8]" />
          </div>
          <StatsPanel />
        </div>
      </main>
      <Footer />
    </div>
  );
}
